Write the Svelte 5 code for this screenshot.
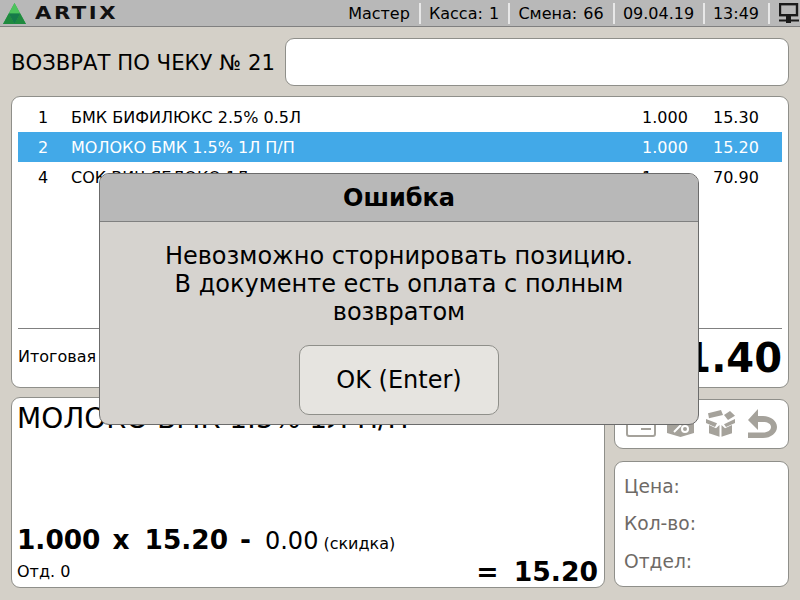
<script>
	const rows = [
		{ num: 1, name: 'БМК БИФИЛЮКС 2.5% 0.5Л', qty: '1.000', sum: '15.30' },
		{ num: 2, name: 'МОЛОКО БМК 1.5% 1Л П/П', qty: '1.000', sum: '15.20', active: true },
		{ num: 4, name: 'СОК ВИЧ ЯБЛОКО 1Л', qty: '1', sum: '70.90' }
	];
	const status = [
		{ text: 'Мастер', width: 82 },
		{ text: 'Касса: 1', width: 89 },
		{ text: 'Смена: 66', width: 105 },
		{ text: '09.04.19', width: 90 },
		{ text: '13:49', width: 65 }
	];
</script>

<div class="screen">
	<header class="topbar">
		<div class="logo">
			<svg width="23" height="21" viewBox="0 0 24 22">
				<polygon points="12,0 24,22 0,22" fill="#2fa84a" />
				<polygon points="12,0 18,11 6,11" fill="#4cc35c" />
				<polygon points="6,11 12,22 0,22" fill="#1f8a3f" />
				<polygon points="18,11 24,22 12,22" fill="#1f8a3f" />
				<polygon points="6,11 18,11 12,22" fill="#167a4a" />
			</svg>
			<span class="brand">ARTIX</span>
		</div>
		{#each status as item}
			<div class="cell" style="width: {item.width}px">{item.text}</div>
		{/each}
		<div class="net">
			<svg width="20" height="20" viewBox="0 0 20 20">
				<rect x="1" y="1.2" width="17" height="11" fill="none" stroke="#1a1a1a" stroke-width="2.4" />
				<rect x="7" y="13" width="5" height="2" fill="#1a1a1a" />
				<rect x="7" y="15" width="5" height="5" fill="#1a1a1a" />
				<rect x="0" y="16.5" width="20" height="2" fill="#1a1a1a" />
			</svg>
		</div>
	</header>

	<main class="content">
		<div class="title-row">
			<h1>ВОЗВРАТ ПО ЧЕКУ № 21</h1>
			<div class="card search"></div>
		</div>

		<section class="card receipt">
			<div class="rows">
				{#each rows as row}
					<div class="row" class:active={row.active}>
						<span class="num">{row.num}</span>
						<span class="name">{row.name}</span>
						<span class="qty">{row.qty}</span>
						<span class="sum">{row.sum}</span>
					</div>
				{/each}
			</div>
			<div class="total">
				<span class="total-label">Итоговая сумма</span>
				<strong>101.40</strong>
			</div>
		</section>

		<div class="bottom">
			<section class="card position">
				<div class="pos-name">МОЛОКО БМК 1.5% 1Л П/П</div>
				<div class="calc">
					<b>1.000</b><b class="op times">x</b><b>15.20</b><b class="op">-</b><span class="disc">0.00</span><span class="disc-label">(скидка)</span>
				</div>
				<div class="pos-foot">
					<span class="dept">Отд. 0</span>
					<b><span class="eq">=</span>15.20</b>
				</div>
			</section>

			<div class="side">
				<section class="card tools">
					<svg width="30" height="30" viewBox="0 0 30 30">
						<rect x="1" y="4" width="28" height="23" rx="2" fill="none" stroke="#a5a29b" stroke-width="2" />
						<rect x="15" y="19" width="10" height="2" fill="#a5a29b" />
					</svg>
					<svg width="28" height="30" viewBox="0 0 28 30">
						<path d="M0 2H27V24L13.5 28L0 24Z" fill="#a5a29b" />
						<path d="M7 23L14 16" stroke="#fff" stroke-width="2" />
						<circle cx="18" cy="20" r="3" fill="none" stroke="#fff" stroke-width="2" />
					</svg>
					<svg width="30" height="30" viewBox="0 0 30 30">
						<path d="M2 4.3L15 1L17 6L3 9.3Z" fill="#a5a29b" />
						<path d="M18 6L24 2L29 6.7L22 11Z" fill="#a5a29b" />
						<path d="M0 10L11 14.3L9 18L0 14Z" fill="#a5a29b" />
						<path d="M29 10L18 15.3L20 18L29 14Z" fill="#a5a29b" />
						<path d="M3 16L10 19.3L13.5 16V27.7L3 24.3Z" fill="#a5a29b" />
						<path d="M26 16L19 19.3L15.5 16V27.7L26 24.3Z" fill="#a5a29b" />
					</svg>
					<svg class="undo" width="30" height="30" viewBox="0 0 30 30">
						<path d="M0 11L10 0V7H15C23 7 29 12 29 18C29 24 23 29 15 29H0V23.5H15C20 23.5 23 21 23 18C23 15 20 13 15 13H10V21Z" fill="#a5a29b" />
					</svg>
				</section>
				<section class="card info">
					<div>Цена:</div>
					<div>Кол-во:</div>
					<div>Отдел:</div>
				</section>
			</div>
		</div>
	</main>

	<div class="dialog">
		<div class="dialog-head">Ошибка</div>
		<div class="dialog-body">
			<p>Невозможно сторнировать позицию.<br />В документе есть оплата с полным<br />возвратом</p>
			<button type="button">OK (Enter)</button>
		</div>
	</div>
</div>

<style>
	:global(body) {
		margin: 0;
	}

	.screen {
		position: relative;
		width: 800px;
		height: 600px;
		overflow: hidden;
		display: flex;
		flex-direction: column;
		background: #d4d0c8;
		color: #000;
		font-family: 'DejaVu Sans', sans-serif;
	}

	.topbar {
		display: flex;
		align-items: center;
		box-sizing: border-box;
		height: 27px;
		background: #b8b8b8;
		border-bottom: 1px solid #808080;
		font-size: 16px;
	}
	.logo {
		flex: 1;
		display: flex;
		align-items: center;
		gap: 9px;
		padding-left: 3px;
	}
	.brand {
		font-weight: bold;
		font-size: 17px;
		letter-spacing: 2px;
		transform: scaleX(1.25);
		transform-origin: left center;
		color: #111;
	}
	.cell {
		box-sizing: border-box;
		height: 21px;
		line-height: 21px;
		text-align: center;
		white-space: pre;
		word-spacing: 1px;
		border-right: 2px solid #e8e8e8;
		padding-right: 1px;
	}
	.logo + .cell {
		padding-right: 0;
	}
	.net {
		width: 30px;
		padding-left: 9px;
		box-sizing: border-box;
		display: flex;
	}

	.content {
		flex: 1;
		display: flex;
		flex-direction: column;
		padding: 11px 11px 12px;
		min-height: 0;
	}

	.card {
		box-sizing: border-box;
		background: #fff;
		border: 1px solid #8f8f8a;
		border-radius: 9px;
	}

	.title-row {
		display: flex;
		align-items: center;
		gap: 10px;
		height: 48px;
	}
	h1 {
		margin: 0;
		font-size: 21.2px;
		font-weight: normal;
		white-space: nowrap;
	}
	.search {
		flex: 1;
		height: 48px;
	}

	.receipt {
		margin-top: 10px;
		height: 292px;
		padding: 5px 6px 0;
		display: flex;
		flex-direction: column;
	}
	.rows {
		flex: 1;
	}
	.row {
		display: flex;
		align-items: center;
		height: 30px;
		font-size: 16px;
	}
	.row.active {
		background: #42a9e8;
		color: #fff;
	}
	.num {
		width: 53px;
		padding-left: 20px;
		box-sizing: border-box;
	}
	.name {
		flex: 1;
	}
	.qty {
		width: 71px;
	}
	.sum {
		width: 69px;
	}
	.total {
		display: flex;
		align-items: center;
		justify-content: space-between;
		height: 58px;
		border-top: 1px solid #808080;
		font-size: 16px;
	}
	.total-label {
		margin-bottom: 3px;
	}
	.total strong {
		font-size: 40px;
	}

	.bottom {
		display: flex;
		gap: 9px;
		margin-top: 9px;
		height: 191px;
	}
	.position {
		flex: 1;
		display: flex;
		flex-direction: column;
		padding: 0 6px;
	}
	.pos-name {
		flex: 1;
		margin-left: -1px;
		font-size: 28px;
		line-height: 41px;
		white-space: nowrap;
	}
	.calc {
		display: flex;
		align-items: baseline;
		margin-left: -1px;
		margin-bottom: 1px;
		font-size: 26.4px;
		line-height: 36px;
	}
	.op {
		margin: 0 13px 0 12px;
	}
	.op.times {
		margin-right: 15px;
	}
	.disc {
		margin-left: 1px;
		font-size: 24px;
	}
	.disc-label {
		margin-left: 5px;
		font-size: 16px;
	}
	.pos-foot {
		display: flex;
		align-items: flex-end;
		justify-content: space-between;
		font-size: 16px;
		height: 24px;
	}
	.dept {
		margin: 0 0 6px -1px;
	}
	.pos-foot b {
		font-size: 26.67px;
		line-height: 32px;
		margin-bottom: -1px;
	}
	.eq {
		margin-right: 15px;
	}

	.side {
		width: 175px;
		display: flex;
		flex-direction: column;
		gap: 12px;
		padding-top: 2px;
		box-sizing: border-box;
	}
	.tools {
		height: 50px;
		display: flex;
		align-items: center;
		gap: 11px;
		padding-left: 11px;
	}
	.tools svg {
		flex-shrink: 0;
	}
	.undo {
		margin-left: 1px;
	}
	.info {
		flex: 1;
		padding: 6px 9px;
		font-size: 18.67px;
		line-height: 37.5px;
		color: #6e6a66;
		margin-bottom: 1px;
	}

	.dialog {
		position: absolute;
		left: 99px;
		top: 173px;
		box-sizing: border-box;
		width: 600px;
		height: 252px;
		display: flex;
		flex-direction: column;
		background: #d6d3cf;
		border: 1px solid #6b6b6b;
		border-radius: 10px;
		overflow: hidden;
	}
	.dialog-head {
		height: 48px;
		line-height: 49px;
		box-sizing: border-box;
		text-align: center;
		font-size: 24px;
		font-weight: bold;
		background: #b8b8b8;
		border-bottom: 1px solid #808080;
	}
	.dialog-body {
		flex: 1;
		display: flex;
		flex-direction: column;
		align-items: center;
		padding-top: 20px;
	}
	.dialog-body p {
		margin: 0;
		text-align: center;
		font-size: 24px;
		line-height: 28px;
	}
	button {
		margin-top: 19px;
		width: 200px;
		height: 70px;
		font: inherit;
		font-size: 24px;
		color: #000;
		background: #e6e4e0;
		border: 1px solid #8f8f8a;
		border-radius: 10px;
	}
</style>
